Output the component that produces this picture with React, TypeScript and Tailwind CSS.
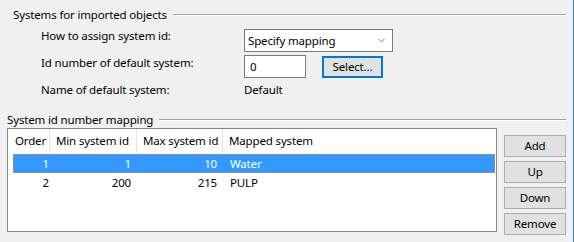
import { ChevronDown } from "lucide-react"

const rows = [
  { order: 1, min: 1, max: 10, name: "Water" },
  { order: 2, min: 200, max: 215, name: "PULP" },
]

function GroupTitle({ title }: { title: string }) {
  return (
    <div className="flex h-[16px] items-center">
      <span className="whitespace-nowrap leading-[16px]">{title}</span>
      <div className="ml-[6px] flex-1 border-t border-b border-t-[#a0a0a0] border-b-white" />
    </div>
  )
}

function SideButton({ label }: { label: string }) {
  return (
    <button className="h-[22px] w-[62px] border border-[#adadad] bg-[#e1e1e1] text-center leading-[20px]">
      {label}
    </button>
  )
}

export default function App() {
  return (
    <div
      className="flex h-[242px] w-[574px] flex-col whitespace-nowrap border-r border-r-[#1883d7] bg-[#f0f0f0] text-[11.5px] tracking-[-0.15px] text-black"
      style={{ fontFamily: '"Noto Sans", "Open Sans", sans-serif' }}
    >
      {/* Systems for imported objects */}
      <div className="ml-[13px] mr-[7px] mt-[7px]">
        <GroupTitle title="Systems for imported objects" />
      </div>

      <div className="ml-[41px] mt-[6px] flex flex-col">
        <div className="flex h-[23px] items-start">
          <span className="w-[203px] leading-[16px] -mt-[1px]">How to assign system id:</span>
          <div className="flex h-[23px] w-[149px] items-center justify-between border border-[#7a7a7a] bg-white pl-[3px] pr-[5px]">
            <span className="leading-[16px]">Specify mapping</span>
            <ChevronDown size={11} strokeWidth={1.5} className="text-[#404040]" />
          </div>
        </div>

        <div className="mt-[3px] flex h-[23px] items-start">
          <span className="w-[203px] leading-[16px]">Id number of default system:</span>
          <div className="flex h-[23px] w-[62px] items-center border border-[#7a7a7a] bg-white pl-[5px]">
            <span className="leading-[16px]">0</span>
          </div>
          <button className="ml-[16px] mt-[1px] h-[22px] w-[61px] border-2 border-[#0078d7] bg-[#e1e1e1] leading-[18px]">
            Select...
          </button>
        </div>

        <div className="mt-[4px] flex">
          <span className="w-[203px] leading-[16px]">Name of default system:</span>
          <span className="leading-[16px]">Default</span>
        </div>
      </div>

      {/* System id number mapping */}
      <div className="ml-[7px] mr-[7px] mt-[14px]">
        <GroupTitle title="System id number mapping" />
      </div>

      <div className="ml-[7px] flex gap-[7px]">
        <div className="h-[104px] w-[490px] border border-[#828790] bg-white">
          <div className="flex h-[24px] items-center">
            <div className="flex h-full w-[42px] items-center border-r border-r-[#e5e5e5] pl-[7px]">Order</div>
            <div className="flex h-full w-[87px] items-center border-r border-r-[#e5e5e5] pl-[6px]">Min system id</div>
            <div className="flex h-full w-[86px] items-center border-r border-r-[#e5e5e5] pl-[6px]">Max system id</div>
            <div className="flex h-full flex-1 items-center pl-[6px]">Mapped system</div>
          </div>
          <div className="mt-[1px] flex flex-col">
            {rows.map((r, i) => (
              <div
                key={r.order}
                className={
                  i === 0
                    ? "ml-[5px] mr-[1px] flex h-[19px] items-center border border-dotted border-[#e08a2a] bg-[#3399ff] text-white"
                    : "ml-[5px] mr-[1px] flex h-[19px] items-center border border-transparent"
                }
              >
                <div className="w-[36px] pr-[1px] text-right">{r.order}</div>
                <div className="w-[87px] pr-[6px] text-right">{r.min}</div>
                <div className="w-[86px] pr-[6px] text-right">{r.max}</div>
                <div className="flex-1 pl-[7px]">{r.name}</div>
              </div>
            ))}
          </div>
        </div>

        <div className="mt-[7px] flex flex-col gap-[4px]">
          <SideButton label="Add" />
          <SideButton label="Up" />
          <SideButton label="Down" />
          <SideButton label="Remove" />
        </div>
      </div>
    </div>
  )
}
